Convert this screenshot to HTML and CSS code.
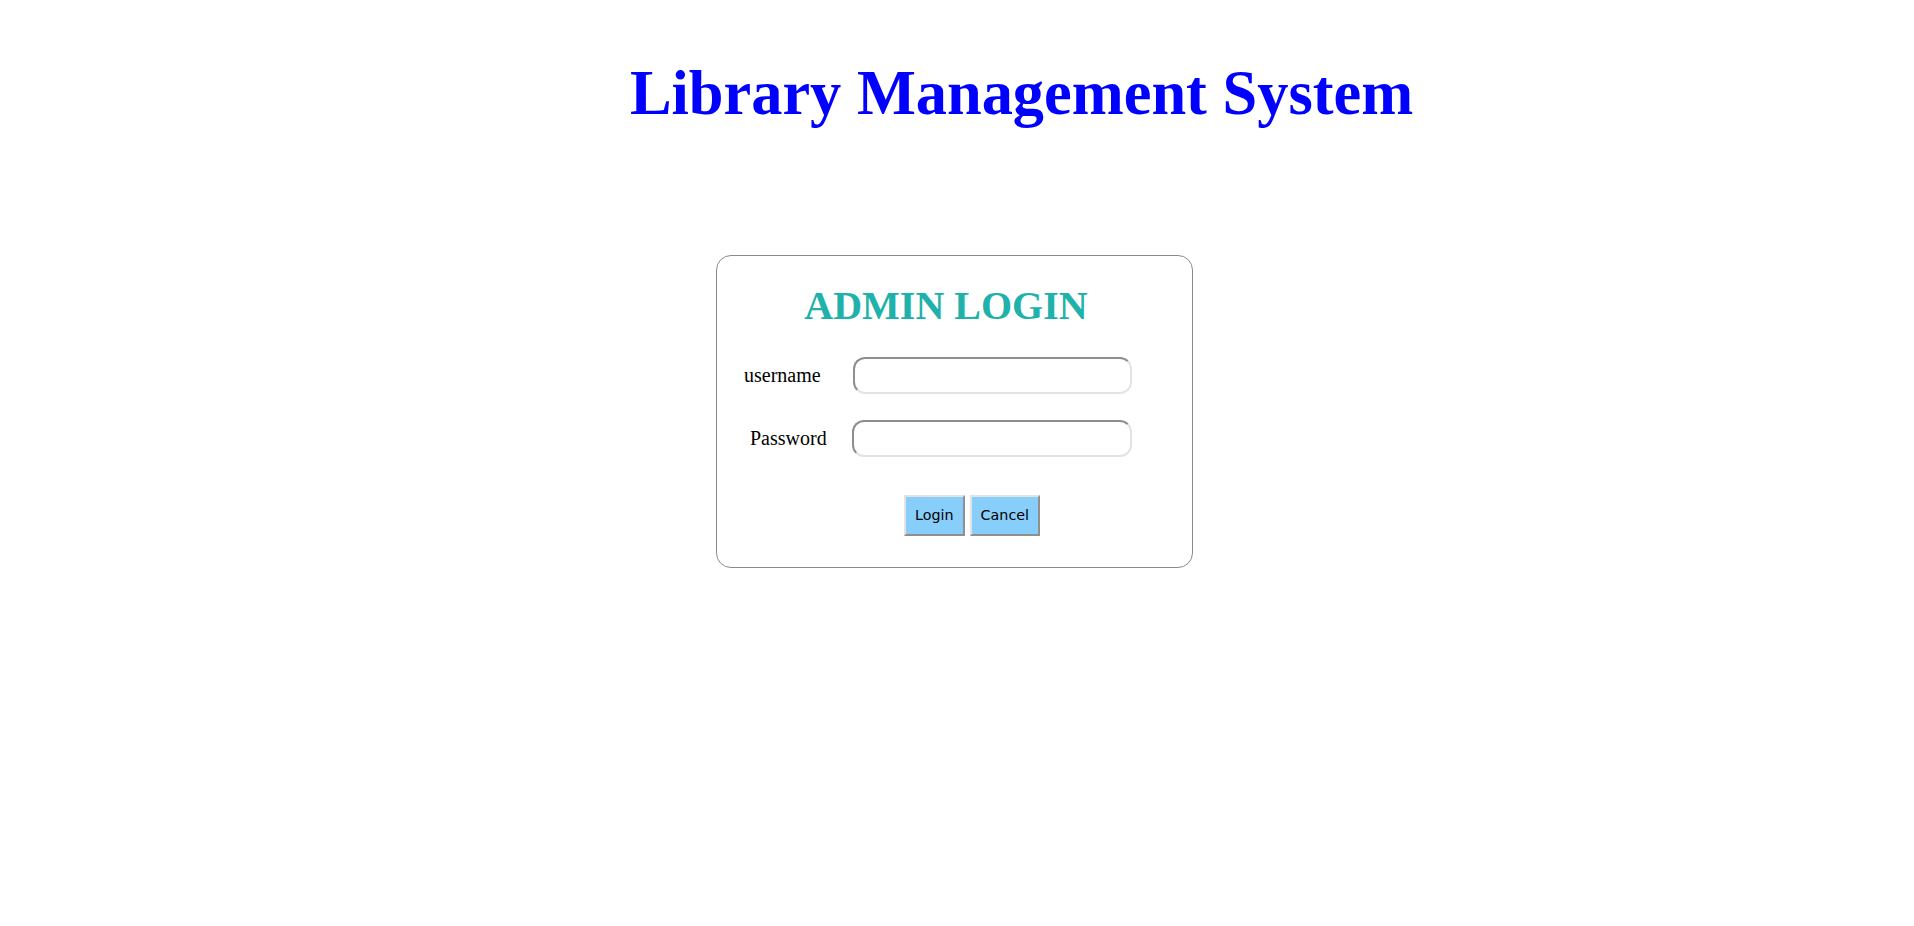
FILE: index.html
```html
<!DOCTYPE html>
<html>
<head>
<meta charset="utf-8">
<title>Library Management System</title>
<link rel="stylesheet" href="styles.css">
</head>
<body>
<h1 class="site-title">Library Management System</h1>
<form class="login-box">
  <h2 class="login-title">ADMIN LOGIN</h2>
  <div class="field field--user">
    <label class="field-label" for="username">username</label>
    <input class="field-input" id="username" type="text">
  </div>
  <div class="field field--pass">
    <label class="field-label" for="password">Password</label>
    <input class="field-input" id="password" type="password">
  </div>
  <div class="actions">
    <button class="btn" type="submit">Login</button>
    <button class="btn" type="reset">Cancel</button>
  </div>
</form>
</body>
</html>
```

FILE: styles.css
```css
html, body {
  margin: 0;
  padding: 0;
  background: #ffffff;
}

body {
  font-family: "Liberation Serif", "Times New Roman", serif;
  color: #000;
}

.site-title {
  margin: 57px 0 0 0;
  padding-left: 129px;
  text-align: center;
  font-family: "Liberation Serif", "Times New Roman", serif;
  font-weight: bold;
  font-size: 62.4px;
  line-height: 72px;
  color: #0000ff;
}

.login-box {
  box-sizing: border-box;
  width: 477px;
  margin: 126px 0 0 calc(50% - 241px);
  border: 1px solid #8a8a8a;
  border-radius: 15px;
  padding: 26px 0 31px 0;
  display: flex;
  flex-direction: column;
}

.login-title {
  margin: 0;
  padding-right: 17px;
  text-align: center;
  font-family: "Liberation Serif", "Times New Roman", serif;
  font-weight: bold;
  font-size: 40px;
  line-height: 48px;
  color: #20b2aa;
}

.field {
  display: flex;
  align-items: center;
  height: 37px;
}

.field--user {
  margin-top: 27px;
}

.field--pass {
  margin-top: 26px;
}

.field-label {
  box-sizing: border-box;
  font-size: 20px;
  line-height: 23px;
  color: #000;
}

.field--user .field-label {
  width: 136px;
  padding-left: 27px;
}

.field--pass .field-label {
  width: 135px;
  padding-left: 33px;
}

.field-input {
  box-sizing: border-box;
  width: 280px;
  height: 37px;
  margin: 0;
  padding: 0 10px;
  border: 2px solid;
  border-color: #8f8f8f #e3e3e3 #e3e3e3 #8f8f8f;
  border-radius: 12px;
  background: #fff;
  font-size: 16px;
  outline: none;
}

.field--user .field-input {
  width: 279px;
}

.actions {
  display: flex;
  gap: 5px;
  margin-top: 38px;
  padding-left: 187px;
}

.btn {
  box-sizing: border-box;
  height: 41px;
  margin: 0;
  padding: 0 9px;
  border: 2px solid;
  border-color: #e3e3e3 #8f8f8f #8f8f8f #e3e3e3;
  border-radius: 0;
  background: #87cefa;
  color: #000;
  font-family: "DejaVu Sans", Tahoma, sans-serif;
  font-size: 14.3px;
  line-height: 17px;
  cursor: pointer;
}
```
